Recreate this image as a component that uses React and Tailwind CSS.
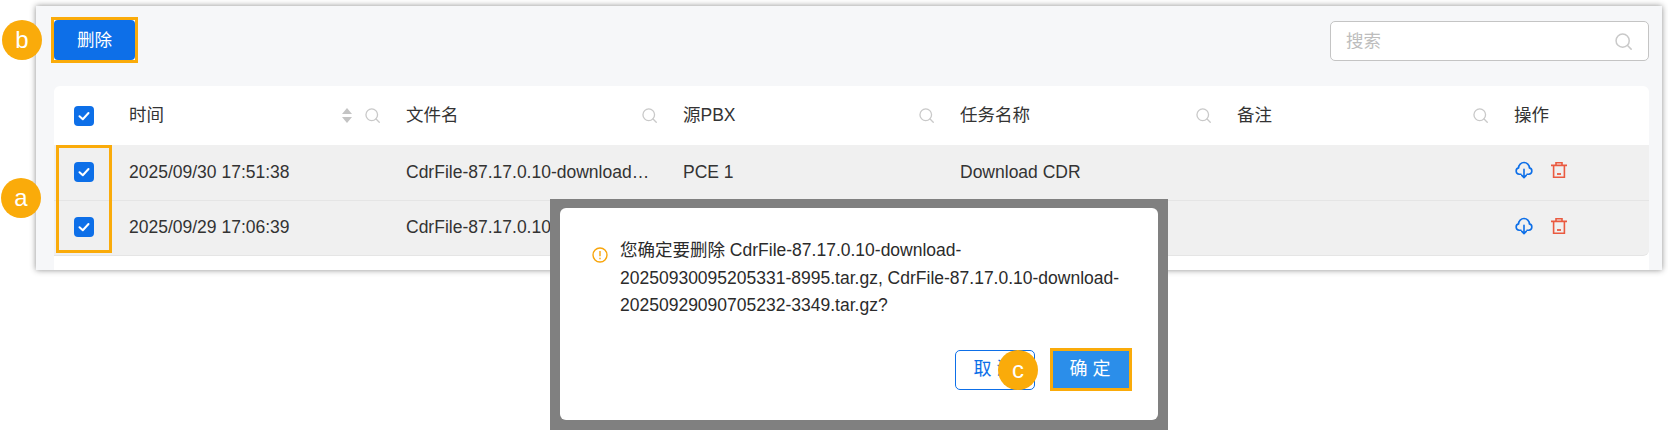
const FONT = '"Liberation Sans", "Noto Sans CJK SC", sans-serif';

function SearchIcon({ className }) {
  return (
    <svg viewBox="0 0 16 16" className={className} fill="none" stroke="#c9c9c9" strokeWidth="1.4">
      <circle cx="7.2" cy="7.2" r="6.2" />
      <path d="M11.8 11.8 15.2 15.2" strokeLinecap="round" />
    </svg>
  );
}

function Check() {
  return (
    <span className="flex h-[20px] w-[20px] items-center justify-center rounded-[4px] bg-[#0d6fe8]">
      <svg viewBox="0 0 14 14" className="h-[14px] w-[14px]" fill="none" stroke="#fff" strokeWidth="2" strokeLinecap="round" strokeLinejoin="round">
        <path d="M2.5 7.2 5.8 10.2 11.5 4" />
      </svg>
    </span>
  );
}

function Cloud() {
  return (
    <svg viewBox="0 0 18 18" className="h-[18px] w-[18px]" fill="none" stroke="#0d6fe8" strokeWidth="1.6" strokeLinecap="round" strokeLinejoin="round">
      <path d="M6 13.2H4.2A3.2 3.2 0 0 1 3.6 6.9 A5.4 5.4 0 0 1 14.4 6.9 A3.2 3.2 0 0 1 13.8 13.2H12" />
      <path d="M9 8.2V16.6M6.8 14.4 9 16.6 11.2 14.4" />
    </svg>
  );
}

function Trash() {
  return (
    <svg viewBox="0 0 16 16" className="h-[16px] w-[16px]" fill="none" stroke="#ea5a40" strokeWidth="1.6">
      <path d="M0 3.4H16M5 3.4V.8H11V3.4M2.6 3.4V15.3H13.4V3.4" />
      <path d="M6 12H10" strokeWidth="1.8" />
    </svg>
  );
}

function Badge({ letter, className }) {
  return (
    <span className={`absolute flex h-[40px] w-[40px] items-center justify-center rounded-full bg-[#faab0a] text-[24px] leading-none text-white ${className}`}>
      {letter}
    </span>
  );
}

const HEAD = ["文件名", "源PBX", "任务名称", "备注"];
const ROWS = [
  ["2025/09/30 17:51:38", "CdrFile-87.17.0.10-download-20250930095205331-8995.tar.gz"],
  ["2025/09/29 17:06:39", "CdrFile-87.17.0.10-download-20250929090705232-3349.tar.gz"],
];
const COLS = "grid grid-cols-[75px_277px_277px_277px_277px_277px_135px]";

export default function App() {
  return (
    <div className="relative h-[430px] w-[1668px] overflow-hidden bg-white text-[17.5px] text-[#333]" style={{ fontFamily: FONT }}>
      <div className="ml-[36px] mr-[6px] mt-[6px] h-[264px] bg-[#f6f7f9] pl-[18px] pr-[13px] shadow-[0_0_6px_rgba(0,0,0,0.45)]">
        <div className="flex items-start justify-between pt-[11px]">
          <div className="-ml-[3px] border-[3px] border-[#faab0a] bg-white">
            <button className="flex h-[40px] w-[81px] items-center justify-center rounded-[4px] bg-[#0d6fe8] text-white">删除</button>
          </div>
          <div className="mt-[4px] flex h-[40px] w-[319px] items-center justify-between rounded-[5px] border border-[#c4c4c4] bg-white pl-[15px] pr-[16px]">
            <span className="text-[#bdbdbd]">搜索</span>
            <SearchIcon className="h-[17px] w-[17px]" />
          </div>
        </div>
        <div className="mt-[23px] h-[184px] rounded-t-[6px] bg-white">
          <div className={`${COLS} h-[59px] items-center`}>
            <div className="pl-[20px]"><Check /></div>
            <div className="flex items-center pr-[26px]">
              <span>时间</span>
              <svg viewBox="0 0 10 15" className="ml-auto mr-[13px] h-[15px] w-[10px]" fill="#c4c4c4">
                <path d="M5 0 10 6H0ZM5 15 0 9H10Z" />
              </svg>
              <SearchIcon className="h-[15px] w-[15px]" />
            </div>
            {HEAD.map((h) => (
              <div key={h} className="flex items-center justify-between pr-[26px]">
                <span>{h}</span>
                <SearchIcon className="h-[15px] w-[15px]" />
              </div>
            ))}
            <div>操作</div>
          </div>
          {ROWS.map(([time, file], i) => (
            <div key={time} className={`${COLS} h-[55.5px] items-center border-b border-[#e5e5e5] bg-[#f0f0f0] pb-[1px] ${i === 1 ? "rounded-br-[6px]" : ""}`}>
              <div className="pl-[20px]"><Check /></div>
              <div>{time}</div>
              <div className="truncate pr-[30px]">{file}</div>
              <div>PCE 1</div>
              <div>Download CDR</div>
              <div />
              <div className="mb-[3px] flex items-center gap-[18px] pl-[1px]">
                <Cloud />
                <Trash />
              </div>
            </div>
          ))}
        </div>
      </div>

      {/* annotations */}
      <span className="absolute left-[56px] top-[145px] h-[108px] w-[56px] border-[3px] border-[#faab0a]" />
      <Badge letter="a" className="left-[1px] top-[178px]" />
      <Badge letter="b" className="left-[2px] top-[20px]" />

      {/* dialog */}
      <div className="absolute left-[550px] top-[199px] h-[231px] w-[618px] bg-[#808080] px-[10px] pt-[9px]">
        <div className="relative h-[212px] rounded-[6px] bg-white pl-[32px] pr-[28px] pt-[29px]">
          <div className="flex gap-[12px] text-[#2b2b2b]">
            <svg viewBox="0 0 16 16" className="mt-[10px] h-[16px] w-[16px] shrink-0" fill="none" stroke="#f8a50a" strokeWidth="1.4">
              <circle cx="8" cy="8" r="7" />
              <path d="M8 4V9.2M8 10.8V12.2" />
            </svg>
            <p className="w-[510px] leading-[27.5px]">
              您确定要删除 CdrFile-87.17.0.10-download-20250930095205331-8995.tar.gz, CdrFile-87.17.0.10-download-20250929090705232-3349.tar.gz?
            </p>
          </div>
          <div className="absolute bottom-[29px] right-[26px] flex items-center gap-[15px]">
            <button className="flex h-[40px] w-[80px] items-center justify-center rounded-[5px] border border-[#0d6fe8] bg-white pl-[3px] text-[18px] tracking-[5px] text-[#0d6fe8]">取消</button>
            <div className="border-[3px] border-[#faab0a]">
              <button className="flex h-[37px] w-[76px] items-center justify-center bg-[#2b8eea] pl-[3px] text-[18px] tracking-[5px] text-white">确定</button>
            </div>
          </div>
          <Badge letter="c" className="left-[438px] top-[142px]" />
        </div>
      </div>
    </div>
  );
}
